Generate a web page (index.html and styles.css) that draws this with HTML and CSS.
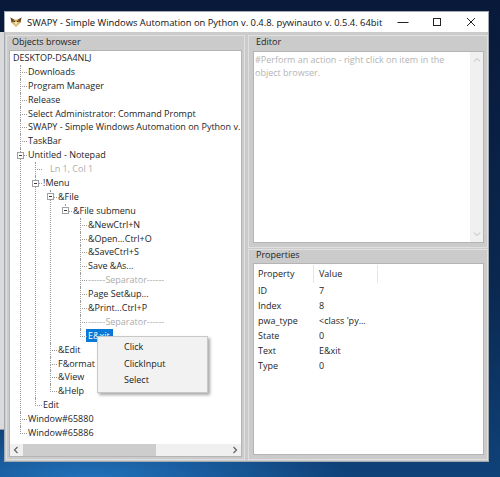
FILE: index.html
```html
<!DOCTYPE html>
<html>
<head>
<meta charset="utf-8">
<title>SWAPY</title>
<link rel="stylesheet" href="styles.css">
</head>
<body>
<div class="behind"></div>
<div class="window">
  <div class="titlebar">
    <svg class="app-icon" viewBox="0 0 12 12" width="12" height="12">
      <path d="M0.5 1.5 L4 3.5 L8 3.5 L11.5 1.5 L10.5 6.5 L6 11 L1.5 6.5 Z" fill="#d8b46a"/>
      <path d="M0.5 1.5 L4 3.5 L3 6 L1.5 6.5 Z" fill="#6e4a26"/>
      <path d="M11.5 1.5 L8 3.5 L9 6 L10.5 6.5 Z" fill="#6e4a26"/>
      <path d="M4 6 L6 9.5 L8 6 Z" fill="#f3e3b4"/>
      <circle cx="4.3" cy="5.2" r="0.8" fill="#2a1a0c"/>
      <circle cx="7.7" cy="5.2" r="0.8" fill="#2a1a0c"/>
    </svg>
    <div class="title">SWAPY - Simple Windows Automation on Python v. 0.4.8. pywinauto v. 0.5.4. 64bit</div>
    <div class="controls">
      <div class="ctl"><svg width="12" height="10" viewBox="0 0 12 10"><path d="M0.5 5.5 H11.5" stroke="#222" stroke-width="1"/></svg></div>
      <div class="ctl"><svg width="10" height="10" viewBox="0 0 10 10"><rect x="1.5" y="1.5" width="7" height="7" fill="none" stroke="#222" stroke-width="1"/></svg></div>
      <div class="ctl"><svg width="10" height="10" viewBox="0 0 10 10"><path d="M1 1 L9 9 M9 1 L1 9" stroke="#222" stroke-width="1"/></svg></div>
    </div>
  </div>
  <div class="client">
    <div class="group left">
      <div class="legend">Objects browser</div>
      <div class="pane tree-pane">
        <div class="tree">
          <ul class="root">
            <li><div class="row"><span class="t">DESKTOP-DSA4NLJ</span></div>
              <ul>
                <li><div class="row"><span class="t">Downloads</span></div></li>
                <li><div class="row"><span class="t">Program Manager</span></div></li>
                <li><div class="row"><span class="t">Release</span></div></li>
                <li><div class="row"><span class="t">Select Administrator: Command Prompt</span></div></li>
                <li><div class="row"><span class="t">SWAPY - Simple Windows Automation on Python v. 0.4.8. pywinauto v. 0.5.4. 64bit</span></div></li>
                <li><div class="row"><span class="t">TaskBar</span></div></li>
                <li><span class="box"></span><div class="row"><span class="t">Untitled - Notepad</span></div>
                  <ul>
                    <li><div class="row dim pad"><span class="t">Ln 1, Col 1</span></div></li>
                    <li><span class="box"></span><div class="row"><span class="t">!Menu</span></div>
                      <ul>
                        <li><span class="box"></span><div class="row"><span class="t">&amp;File</span></div>
                          <ul>
                            <li><span class="box"></span><div class="row"><span class="t">&amp;File submenu</span></div>
                              <ul>
                                <li><div class="row"><span class="t">&amp;NewCtrl+N</span></div></li>
                                <li><div class="row"><span class="t">&amp;Open...Ctrl+O</span></div></li>
                                <li><div class="row"><span class="t">&amp;SaveCtrl+S</span></div></li>
                                <li><div class="row"><span class="t">Save &amp;As...</span></div></li>
                                <li><div class="row dim"><span class="t">------Separator------</span></div></li>
                                <li><div class="row"><span class="t">Page Set&amp;up...</span></div></li>
                                <li><div class="row"><span class="t">&amp;Print...Ctrl+P</span></div></li>
                                <li><div class="row dim"><span class="t">------Separator------</span></div></li>
                                <li><div class="row"><span class="t sel">E&amp;xit</span></div></li>
                              </ul>
                            </li>
                          </ul>
                        </li>
                        <li><div class="row"><span class="t">&amp;Edit</span></div></li>
                        <li><div class="row"><span class="t">F&amp;ormat</span></div></li>
                        <li><div class="row"><span class="t">&amp;View</span></div></li>
                        <li><div class="row"><span class="t">&amp;Help</span></div></li>
                      </ul>
                    </li>
                    <li><div class="row"><span class="t">Edit</span></div></li>
                  </ul>
                </li>
                <li><div class="row"><span class="t">Window#65880</span></div></li>
                <li><div class="row"><span class="t">Window#65886</span></div></li>
              </ul>
            </li>
          </ul>
        </div>
        <div class="hscroll">
          <div class="arrow"><svg width="6" height="8" viewBox="0 0 6 8"><path d="M4.5 1 L1.5 4 L4.5 7" fill="none" stroke="#606060" stroke-width="1.2"/></svg></div>
          <div class="thumb"></div>
          <div class="track"></div>
          <div class="arrow"><svg width="6" height="8" viewBox="0 0 6 8"><path d="M1.5 1 L4.5 4 L1.5 7" fill="none" stroke="#606060" stroke-width="1.2"/></svg></div>
        </div>
        <div class="ctx-menu">
          <div class="ctx-item">Click</div>
          <div class="ctx-item">ClickInput</div>
          <div class="ctx-item">Select</div>
        </div>
      </div>
    </div>
    <div class="right-col">
      <div class="group editor">
        <div class="legend">Editor</div>
        <div class="pane editor-pane">
          <div class="editor-text">#Perform an action - right click on item in the<br>object browser.</div>
          <div class="vscroll">
            <svg width="8" height="6" viewBox="0 0 8 6"><path d="M1 4.5 L4 1.5 L7 4.5" fill="none" stroke="#b8b8b8" stroke-width="1"/></svg>
            <svg width="8" height="6" viewBox="0 0 8 6"><path d="M1 1.5 L4 4.5 L7 1.5" fill="none" stroke="#b8b8b8" stroke-width="1"/></svg>
          </div>
        </div>
      </div>
      <div class="group props">
        <div class="legend">Properties</div>
        <div class="pane props-pane">
          <div class="prow head"><div class="c1">Property</div><div class="c2">Value</div><div></div></div>
          <div class="prow"><div class="c1">ID</div><div class="c2">7</div><div></div></div>
          <div class="prow"><div class="c1">Index</div><div class="c2">8</div><div></div></div>
          <div class="prow"><div class="c1">pwa_type</div><div class="c2">&lt;class 'py...</div><div></div></div>
          <div class="prow"><div class="c1">State</div><div class="c2">0</div><div></div></div>
          <div class="prow"><div class="c1">Text</div><div class="c2">E&amp;xit</div><div></div></div>
          <div class="prow"><div class="c1">Type</div><div class="c2">0</div><div></div></div>
        </div>
      </div>
    </div>
  </div>
</div>
</body>
</html>
```

FILE: styles.css
```css
* { box-sizing: border-box; }
html, body { margin: 0; }
body {
  width: 500px;
  height: 477px;
  overflow: hidden;
  position: relative;
  padding: 11px 11px 0 4px;
  font-family: "Open Sans", "Noto Sans", sans-serif;
  font-size: 9px;
  color: #222;
  background:
    radial-gradient(ellipse 260px 60px at 90px 480px, #2273bd 0%, rgba(34,115,189,0) 100%),
    linear-gradient(180deg, #08193a 0%, #0a2850 60%, #0f4279 100%);
}
.behind {
  position: absolute;
  left: 0;
  top: 32px;
  width: 4px;
  height: 398px;
  background: #dadada;
  border-bottom: 1px solid #8a98aa;
}
.window {
  width: 485px;
  height: 451px;
  border: 1px solid #a4aab2;
  background: #cbcbcb;
  display: flex;
  flex-direction: column;
  position: relative;
}
.titlebar {
  flex: none;
  height: 20px;
  background: #fff;
  display: flex;
  align-items: center;
  padding-left: 5px;
}
.app-icon { flex: none; margin-right: 5px; }
.title {
  flex: 1;
  font-size: 9.4px;
  color: #111;
  white-space: nowrap;
  overflow: hidden;
}
.controls { display: flex; height: 100%; }
.ctl {
  width: 34px;
  display: flex;
  align-items: center;
  justify-content: center;
}
.client {
  flex: 1;
  min-height: 0;
  display: flex;
  gap: 3px;
  padding: 3px 0 1px 1px;
}
.group {
  border: 1px solid #e0e0e0;
  display: flex;
  flex-direction: column;
}
.group.left { width: 239px; padding: 0 2px 2px 2px; }
.right-col { width: 240px; display: flex; flex-direction: column; gap: 1px; }
.group.editor { height: 213px; padding: 0 3px 4px 4px; }
.group.props { height: 211px; padding: 0 3px 4px 4px; }
.legend {
  flex: none;
  height: 14px;
  line-height: 12px;
  padding-left: 3px;
  color: #1e1e1e;
  white-space: nowrap;
}
.editor .legend { height: 15px; }
.props .legend { height: 13px; line-height: 10px; }
.pane {
  flex: 1;
  min-height: 0;
  background: #fff;
  border: 1px solid #b4b4b4;
}
.tree-pane {
  display: flex;
  flex-direction: column;
  position: relative;
  overflow: hidden;
}
.tree { flex: 1; overflow: hidden; }
.tree ul { list-style: none; margin: 0; padding: 0 0 0 15px; }
.tree ul.root { padding-left: 3px; }
.tree li { position: relative; }
.row {
  height: 13.9px;
  line-height: 13.9px;
  white-space: nowrap;
  color: #252525;
}
.row.dim { color: #acacac; }
.row.pad { padding-left: 7px; }
.t.sel {
  background: #0a78d7;
  color: #fff;
  margin-left: -2px;
  padding: 0 3px 0 2px;
  display: inline-block;
  height: 13px;
  line-height: 13px;
}
.tree ul ul > li::before {
  content: "";
  position: absolute;
  left: -8px;
  top: 0;
  width: 6px;
  height: 7px;
  border-left: 1px dotted #9a9a9a;
  border-bottom: 1px dotted #9a9a9a;
}
.tree ul ul > li::after {
  content: "";
  position: absolute;
  left: -8px;
  top: 7px;
  bottom: 0;
  border-left: 1px dotted #9a9a9a;
}
.tree ul ul > li:last-child::after { display: none; }
.box {
  position: absolute;
  left: -11px;
  top: 3.5px;
  width: 7px;
  height: 7px;
  border: 1px solid #a0a0a0;
  background: #fff;
  z-index: 1;
}
.box::after {
  content: "";
  position: absolute;
  left: 1px;
  top: 2px;
  width: 3px;
  height: 1px;
  background: #3a3a3a;
}
.hscroll {
  flex: none;
  height: 12px;
  display: flex;
  background: #f0f0f0;
}
.hscroll .arrow {
  width: 12px;
  display: flex;
  align-items: center;
  justify-content: center;
}
.hscroll .thumb { width: 133px; margin-left: 1px; background: #cdcdcd; }
.hscroll .track { flex: 1; }
.ctx-menu {
  position: absolute;
  left: 87px;
  top: 285px;
  width: 111px;
  height: 57px;
  background: #f2f2f2;
  border: 1px solid #c8c8c8;
  box-shadow: 2px 2px 3px rgba(0, 0, 0, 0.35);
  padding-top: 2px;
  z-index: 5;
}
.ctx-item {
  height: 16.5px;
  line-height: 16.5px;
  padding-left: 26px;
  color: #1a1a1a;
}
.editor-pane { display: flex; }
.editor-text {
  flex: 1;
  padding: 2px 0 0 1px;
  line-height: 12.5px;
  color: #b4b4b4;
  white-space: nowrap;
  overflow: hidden;
}
.vscroll {
  width: 13px;
  background: #f0f0f0;
  display: flex;
  flex-direction: column;
  justify-content: space-between;
  align-items: center;
  padding: 5px 0 5px 0;
}
.props-pane { padding-top: 1px; }
.prow {
  display: grid;
  grid-template-columns: 60px 64px 1fr;
  height: 15px;
  line-height: 15px;
  color: #252525;
  white-space: nowrap;
}
.prow.head { height: 18px; line-height: 18px; }
.prow.head .c1, .prow.head .c2 { border-right: 1px solid #e6e6e6; }
.prow .c1 { padding-left: 4px; }
.prow .c2 { padding-left: 5px; }
```
